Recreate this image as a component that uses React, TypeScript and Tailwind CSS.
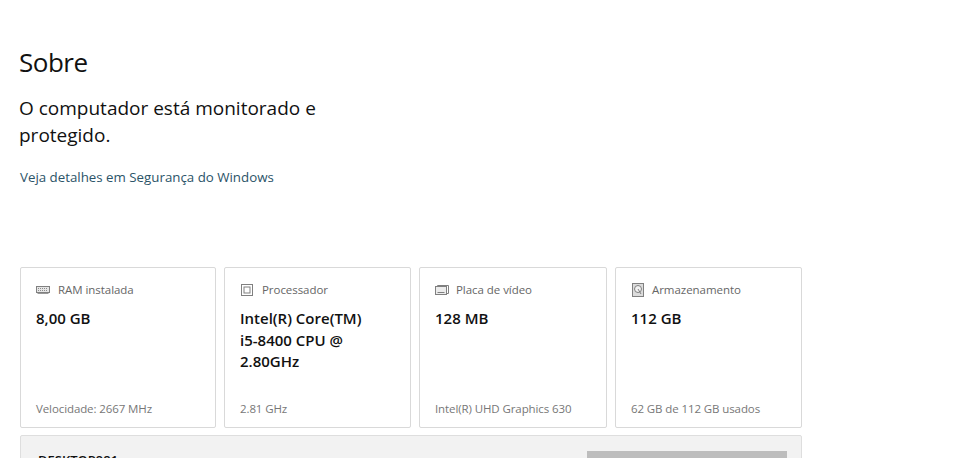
const cards = [
  { label: 'RAM instalada', value: '8,00 GB', foot: 'Velocidade: 2667 MHz', icon: 'ram', gap: 'gap-[8px]' },
  { label: 'Processador', value: 'Intel(R) Core(TM) i5-8400 CPU @ 2.80GHz', foot: '2.81 GHz', icon: 'cpu', gap: 'gap-[8px]' },
  { label: 'Placa de vídeo', value: '128 MB', foot: 'Intel(R) UHD Graphics 630', icon: 'gpu', gap: 'gap-[7px]' },
  { label: 'Armazenamento', value: '112 GB', foot: '62 GB de 112 GB usados', icon: 'disk', gap: 'gap-[7px]' },
];

function CardIcon({ name }: { name: string }) {
  return (
    <svg width="14" height="14" viewBox="0 0 14 14" fill="none" stroke="#808080" strokeWidth="1" className="shrink-0">
      {name === 'ram' && (
        <>
          <rect x="0.5" y="3.5" width="13" height="6" fill="#e6e6e6" />
          <path d="M2 5.5h10M2 7.5h10" stroke="#8c8c8c" strokeDasharray="1 1" />
          <path d="M1.5 10.5h11" stroke="#999999" />
        </>
      )}
      {name === 'cpu' && (
        <>
          <rect x="1.5" y="1.5" width="11" height="11" />
          <rect x="4" y="4" width="6" height="6" />
        </>
      )}
      {name === 'gpu' && (
        <>
          <rect x="0.5" y="3.5" width="11" height="8" fill="#ececec" />
          <path d="M2.5 3.5v-1h11v8h-2M2.5 9.5h7" />
        </>
      )}
      {name === 'disk' && (
        <>
          <rect x="1.5" y="0.5" width="11" height="13" fill="#dcdcdc" />
          <circle cx="7" cy="6" r="3.5" fill="#f2f2f2" />
          <path d="M7 6l3 5" />
        </>
      )}
    </svg>
  );
}

export default function App() {
  return (
    <div className="h-[458px] w-[953px] overflow-hidden bg-white pl-5 font-['Open_Sans',sans-serif]">
      <h1 className="-ml-px pt-[43px] text-[26px] leading-[38px] tracking-[-0.5px] text-[#111111]">Sobre</h1>

      <p className="-ml-px mt-[14px] w-[310px] text-[19px] leading-[27px] text-[#111111]">
        O computador está monitorado e protegido.
      </p>

      <a className="mt-[18px] block text-[13.3px] leading-[20px] text-[#2b5468]">
        Veja detalhes em Segurança do Windows
      </a>

      {/* Cards */}
      <div className="mt-[80px] grid w-[782px] grid-cols-[196px_187px_188px_187px] gap-2">
        {cards.map((card) => (
          <div
            key={card.label}
            className="flex h-[161px] flex-col rounded-[2px] border border-[#d9d9d9] px-[15px] pb-[10px] pt-[13px]"
          >
            <div className={`flex items-center text-[11.5px] leading-[18px] tracking-[-0.05px] text-[#666666] ${card.gap}`}>
              <CardIcon name={card.icon} />
              <span>{card.label}</span>
            </div>
            <p className="mt-[9px] max-w-[132px] text-[15px] font-semibold leading-[21.5px] text-[#111111]">
              {card.value}
            </p>
            <p className="mt-auto text-[11.5px] leading-[16px] tracking-[-0.1px] text-[#777777]">{card.foot}</p>
          </div>
        ))}
      </div>

      {/* Device name */}
      <div className="mt-[7px] flex h-[60px] w-[782px] items-start justify-between rounded-[2px] border border-[#dedede] bg-[#f2f2f2] pl-[17px] pr-[14px] pt-[15px]">
        <span className="text-[13px] font-semibold leading-[18px] text-[#111111]">DESKTOP981</span>
        <div className="h-[30px] w-[200px] bg-[#bdbdbd]" />
      </div>
    </div>
  );
}
